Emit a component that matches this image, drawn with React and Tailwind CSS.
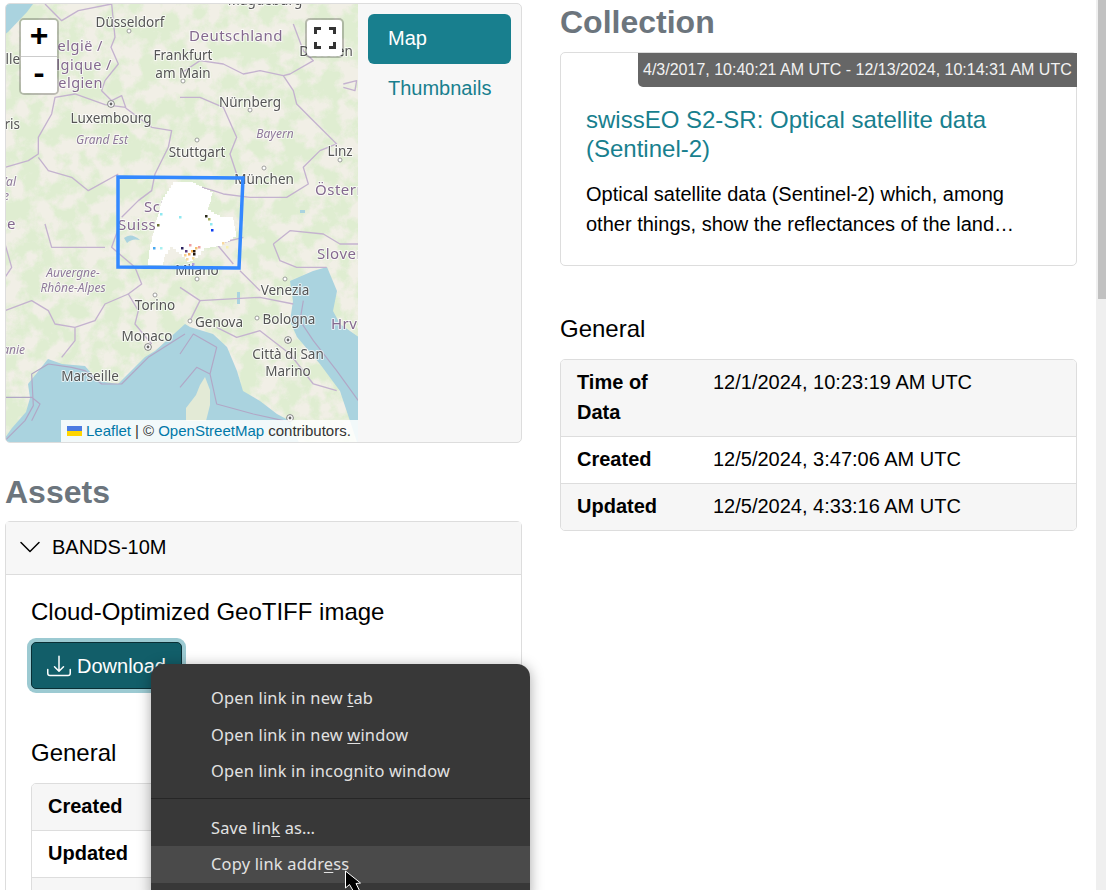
import { BsDownload, BsChevronDown } from "react-icons/bs";

const sans = "font-['Liberation_Sans',Arial,sans-serif]";

// map drawing, path coords are zoomed 3x from each map quadrant
const borders = [
  // north west
  [5, 4, "M320 0 L330 100 L318 130 L340 180 L300 230 L290 260 L320 290 L350 275 L362 310 L300 302 L210 270 L150 280 L140 330 L100 400 L100 450 L70 470 L0 490"],
  [5, 4, "M362 312 L440 370 L500 380 L490 430 L450 510 L440 560 L400 590 L350 640"],
  [5, 4, "M100 460 L130 500 L200 520 L250 560 L340 510 M120 0 L170 50 L220 20 L320 0"],
  // north east
  [180, 4, "M340 60 L370 140 L400 170 L330 210 L310 215 L340 260 L350 300 L400 350 L460 410 L470 420 L420 440 L370 490 L385 540 L320 580 L210 580 L130 570 L100 560 L30 540"],
  [180, 4, "M0 210 L60 170 L130 180 L190 210 L240 200 L310 215 M0 280 L60 280 L130 310 L170 400 L150 450 L170 510 M490 240 L530 230 L525 260 L490 250"],
  // south west
  [5, 224, "M345 0 L320 70 L390 130 L410 180 L370 210 L400 260 L390 300 L440 360 M0 60 L20 130 L0 160 M120 0 L140 70 L220 70 L300 70"],
  [5, 224, "M0 260 L80 230 L130 260 L150 300 L210 310 L210 350 L170 400 M210 310 L270 290 L300 240 L370 210"],
  // south east
  [180, 224, "M0 190 L60 230 L240 220 L340 240 M180 140 L240 200 M280 60 L330 20 L430 30 L480 60 L535 60 M280 60 L300 110 L350 130 L440 130"],
  [180, 224, "M60 230 L30 290 M110 310 L170 340 L240 320 L330 390 L400 480 L470 500 M160 120 L110 60 L190 40"],
];

const seaLines = [
  [5, 224, "M0 650 L60 590 L85 545 L80 450 L130 420 L200 430 L240 440 L290 480 L350 480 L430 400 L540 330 M0 520 L80 520 L105 540 L80 590"],
  [180, 224, "M0 390 L40 330 L110 370 L90 450 L110 540 L220 570 L310 590 M0 490 L50 430 L90 450 M370 230 L360 290 L400 350 L470 440 L535 530"],
];

const labels = [
  ["Magdeburg", 265, 5, "c"],
  ["Düsseldorf", 130, 27, "c"],
  ["Frankfurt", 183, 60, "c"],
  ["am Main", 183, 78, "c"],
  ["Nürnberg", 250, 107, "c"],
  ["Luxembourg", 111, 123, "c"],
  ["Stuttgart", 197, 157, "c"],
  ["Linz", 340, 156, "c"],
  ["München", 264, 184, "c"],
  ["Milano", 197, 275, "c"],
  ["Venezia", 285, 295, "c"],
  ["Torino", 155, 310, "c"],
  ["Genova", 219, 327, "c"],
  ["Bologna", 289, 324, "c"],
  ["Monaco", 147, 341, "c"],
  ["Città di San", 288, 359, "c"],
  ["Marino", 288, 376, "c"],
  ["Marseille", 90, 381, "c"],
  ["Paris", 20, 129, "e"],
  ["Lille", 20, 64, "e"],
  ["Dresden", 326, 56, "c"],
];

const countries = [
  ["Deutschland", 236, 41, "c", 15],
  ["België /", 103, 51, "e", 14.5],
  ["Belgique /", 112, 70, "e", 14.5],
  ["Belgien", 103, 88, "e", 14.5],
  ["Österreich", 315, 195, "s", 15],
  ["Schweiz", 144, 212, "s", 15],
  ["Suisse", 118, 230, "s", 15],
  ["Slovenija", 317, 259, "s", 15],
  ["Hrvatska", 331, 329, "s", 15],
  ["France", 16, 229, "e", 15],
];

const regions = [
  ["Grand Est", 102, 144, "c"],
  ["Bayern", 275, 138, "c"],
  ["Auvergne-", 73, 277, "c"],
  ["Rhône-Alpes", 73, 292, "c"],
  ["Centre-Val", 16, 186, "e"],
  ["de Loire", 9, 200, "e"],
  ["Occitanie", 25, 354, "e"],
];

const dots = [
  [129, 31], [183, 81], [250, 110], [197, 140], [264, 168], [340, 160],
  [197, 279], [285, 279], [155, 295], [190, 321], [257, 318],
];

const targets = [[111, 104], [288, 340], [148, 347], [290, 418]];

const specks = [
  [160, 213, "#8fe8f0"], [179, 216, "#8fe8f0"], [211, 229, "#0a3cf0"], [210, 223, "#8fe8f0"],
  [205, 215, "#2b2b1a"], [208, 218, "#a8b060"], [153, 247, "#4aa8f0"], [160, 247, "#a8f0f0"],
  [181, 247, "#2a2060"], [185, 250, "#5a3a80"], [191, 250, "#f4b050"], [195, 247, "#f4c070"],
  [193, 250, "#2b1a10"], [193, 253, "#20180c"], [188, 253, "#f0a860"], [184, 254, "#f6d090"],
  [186, 258, "#f6d8a0"], [192, 257, "#f8e0a0"], [192, 263, "#b0a0e0"], [222, 242, "#f8d8a0"],
  [226, 246, "#f8f0b0"], [157, 224, "#6a7030"], [189, 244, "#f0a0a0"], [198, 246, "#f0a0a0"],
];

const footprint = [
  [148, 265], [149, 250], [153, 233], [157, 217], [163, 197], [173, 182], [190, 182], [213, 193],
  [208, 210], [220, 217], [233, 217], [236, 237], [222, 246], [207, 248], [198, 258], [190, 262],
  [182, 254], [173, 247], [165, 257], [163, 265],
];

// raster edge of the overlay, walk the outline in small stairs
function stairs(points, step = 3) {
  let d = `M${points[0][0]} ${points[0][1]}`;
  points.forEach(([x, y], i) => {
    const [nx, ny] = points[(i + 1) % points.length];
    const n = Math.max(1, Math.round(Math.max(Math.abs(nx - x), Math.abs(ny - y)) / step));
    for (let k = 1; k <= n; k++) {
      const px = x + ((nx - x) * k) / n;
      const py = y + ((ny - y) * k) / n;
      d += ` H${Math.round(px)} V${Math.round(py)}`;
    }
  });
  return d + " Z";
}

function Lines({ items, color, width }) {
  return items.map(([x, y, d], i) => (
    <g key={i} transform={`translate(${x} ${y}) scale(0.3333)`}>
      <path d={d} fill="none" stroke={color} strokeWidth={width} strokeLinejoin="round" />
    </g>
  ));
}

function MapArt() {
  const anchor = { c: "middle", e: "end", s: "start" };
  return (
    <svg width="352" height="438" viewBox="6 4 352 438" className="block">
      <defs>
        <filter id="greens" x="0" y="0" width="100%" height="100%">
          <feTurbulence type="fractalNoise" baseFrequency="0.05" numOctaves="5" seed="7" />
          <feColorMatrix values="0 0 0 0 0.72  0 0 0 0 0.85  0 0 0 0 0.62  0 0 0 4.5 -1.7" />
        </filter>
        <filter id="soft">
          <feGaussianBlur stdDeviation="0.45" />
        </filter>
      </defs>

      <g filter="url(#soft)">
        <rect x="0" y="0" width="360" height="445" fill="#f1efe6" />
        <rect x="0" y="0" width="360" height="445" fill="#000" filter="url(#greens)" opacity="0.85" />
        {/* north sea */}
        <path d="M0 0 H36 L27 12 L8 32 L0 38 Z" fill="#aad3df" />
        {/* mediterranean */}
        <path
          d="M0 445 L12 428 L26 412 L30 398 L28 384 L48 359 L62 364 L85 366 L98 381 L118 384 L145 357 L155 351 L185 324 L190 327 L213 334 L227 347 L237 371 L243 391 L260 401 L277 414 L290 421 L300 445 Z"
          fill="#aad3df"
        />
        {/* adriatic */}
        <path
          d="M290 281 L313 271 L327 267 L337 291 L333 311 L340 324 L360 338 V445 H358 L340 391 L320 364 L297 337 L290 321 L293 301 Z"
          fill="#aad3df"
        />
        {/* corsica and lakes */}
        <path d="M205 377 L210 390 L210 405 L206 421 H186 L186 408 L196 395 L200 385 Z" fill="#e3ead6" />
        <path d="M124 238 Q131 232 140 240 Q132 238 127 243 Z" fill="#aad3df" />
        <path d="M237 292 h3 v12 h-3 Z M300 210 h5 v3 h-5 Z" fill="#aad3df" />
        <Lines items={seaLines} color="#b1a7c6" width="3.5" />
        <Lines items={borders} color="#c4b2cf" width="4" />

        {dots.map(([x, y], i) => (
          <circle key={i} cx={x} cy={y} r="2" fill="#fff" stroke="#8a8a8a" strokeWidth="0.8" />
        ))}
        {targets.map(([x, y], i) => (
          <g key={i}>
            <circle cx={x} cy={y} r="3.4" fill="#fff" stroke="#777" strokeWidth="0.9" />
            <circle cx={x} cy={y} r="1.4" fill="#666" />
          </g>
        ))}

        <g fontFamily="'Noto Sans',sans-serif" strokeLinejoin="round" style={{ paintOrder: "stroke" }}>
          {labels.map(([t, x, y, a]) => (
            <text key={t} x={x} y={y} textAnchor={anchor[a]} fontSize="13.5" fill="#555" stroke="#ffffff" strokeOpacity="0.7" strokeWidth="2">
              {t}
            </text>
          ))}
          {countries.map(([t, x, y, a, s]) => (
            <text key={t} x={x} y={y} textAnchor={anchor[a]} fontSize={s} letterSpacing="0.5" fill="#84698f" stroke="#ffffff" strokeOpacity="0.7" strokeWidth="2">
              {t}
            </text>
          ))}
          {regions.map(([t, x, y, a]) => (
            <text key={t} x={x} y={y} textAnchor={anchor[a]} fontSize="12" fontStyle="italic" fill="#8f7a9b" stroke="#ffffff" strokeOpacity="0.6" strokeWidth="2">
              {t}
            </text>
          ))}
        </g>

        {/* scene footprint */}
        <path d={stairs(footprint)} fill="#fff" />
        {specks.map(([x, y, c], i) => (
          <rect key={i} x={x} y={y} width="2.5" height="2.5" fill={c} />
        ))}
      </g>

      <path d="M118 177 L243 178 L239 268 L118 267 Z" fill="none" stroke="#3388ff" strokeWidth="3.5" />
    </svg>
  );
}

function MapControls() {
  return (
    <>
      <div className="absolute left-[13px] top-[14px] w-[40px] rounded-[5px] border-2 border-[rgba(0,0,0,0.22)] bg-clip-padding">
        <div className="h-[37px] rounded-t-[3px] bg-white border-b border-[#ccc] flex items-center justify-center text-[32px] font-bold leading-none text-black font-['Liberation_Mono',monospace]">
          +
        </div>
        <div className="h-[36px] rounded-b-[3px] bg-white flex items-center justify-center text-[30px] font-bold leading-none text-black font-['Liberation_Mono',monospace]">
          -
        </div>
      </div>
      <div className="absolute left-[299px] top-[14px] w-[39px] h-[40px] rounded-[5px] border-2 border-[rgba(0,0,0,0.22)] bg-white bg-clip-padding flex items-center justify-center">
        <svg width="22" height="22" viewBox="0 0 22 22" fill="none" stroke="#333" strokeWidth="3">
          <path d="M1.5 7V1.5H7M15 1.5H20.5V7M20.5 15V20.5H15M7 20.5H1.5V15" />
        </svg>
      </div>
      <div className="absolute right-0 bottom-0 h-[22px] w-[297px] bg-[rgba(255,255,255,0.85)] flex items-center pl-[6px] text-[15px] text-[#333] whitespace-nowrap">
        <svg width="15" height="10" viewBox="0 0 12 8" className="mr-[4px]">
          <rect width="12" height="4" fill="#4C7BE1" />
          <rect y="4" width="12" height="4" fill="#FFD500" />
        </svg>
        <span className="text-[#0078a8]">Leaflet</span>
        <span className="mx-[4px]">|</span>
        <span>©&nbsp;</span>
        <span className="text-[#0078a8]">OpenStreetMap</span>
        <span>&nbsp;contributors.</span>
      </div>
    </>
  );
}

function InfoTable({ rows, labelWidth }) {
  return (
    <div className="rounded-[5px] border border-[#ddd] overflow-hidden text-[20px] leading-[30px]">
      {rows.map((r, i) => (
        <div
          key={i}
          className={`flex min-h-[46px] ${i > 0 ? "border-t border-[#ddd]" : ""} ${i % 2 === 0 ? "bg-[#f6f6f6]" : "bg-white"}`}
        >
          <div className={`${labelWidth} shrink-0 pl-[16px] pr-[32px] pt-[7px] pb-[9px] font-bold`}>{r[0]}</div>
          <div className="pt-[7px] pb-[9px]">{r[1]}</div>
        </div>
      ))}
    </div>
  );
}

function MenuItem({ children, active }) {
  return (
    <div className={`pl-[60px] flex items-center ${active ? "h-[37px] bg-[#4a4a4a]" : "h-[36.5px]"}`}>{children}</div>
  );
}

function ContextMenu() {
  return (
    <div className="absolute left-[151px] top-[664px] w-[379px] h-[240px] rounded-t-[13px] rounded-b-[13px] bg-[#383838] text-[#e2e2e2] text-[16.4px] tracking-[0.2px] font-['Noto_Sans',sans-serif] shadow-[0_2px_14px_rgba(0,0,0,0.35)] pt-[16px] leading-none whitespace-nowrap">
      <MenuItem>
        <span>Open link in new <u className="underline-offset-2">t</u>ab</span>
      </MenuItem>
      <MenuItem>
        <span>Open link in new <u className="underline-offset-2">w</u>indow</span>
      </MenuItem>
      <MenuItem>
        <span>Open link in inco<u className="underline-offset-2">g</u>nito window</span>
      </MenuItem>
      <div className="mt-[8px] mb-[11px] border-t border-[#262626]" />
      <MenuItem>
        <span>Save lin<u className="underline-offset-2">k</u> as…</span>
      </MenuItem>
      <MenuItem active>
        <span>Copy link addr<u className="underline-offset-2">e</u>ss</span>
      </MenuItem>
    </div>
  );
}

export default function App() {
  return (
    <div className={`relative h-[890px] w-[1106px] overflow-hidden bg-white text-black flex ${sans}`}>
      <main className="w-[1096px] flex pl-[5px] gap-[38px] pt-[3px]">
        {/* LEFT */}
        <div className="w-[517px]">
          <div className="h-[440px] rounded-[5px] border border-[#ddd] bg-[#f7f7f7] overflow-hidden flex">
            <div className="relative w-[352px] h-[438px] shrink-0">
              <MapArt />
              <MapControls />
            </div>
            <div className="ml-[10px] w-[143px] pt-[10px] text-[20px] leading-[30px]">
              <div className="h-[50px] rounded-[6px] bg-[#187f8e] text-white px-[20px] py-[9px]">Map</div>
              <div className="h-[50px] text-[#187f8e] px-[20px] py-[9px]">Thumbnails</div>
            </div>
          </div>

          <h2 className="mt-[30px] mb-[10px] text-[32px] leading-[38px] font-bold text-[#6c757d]">Assets</h2>

          <div className="rounded-t-[5px] border border-[#ddd]">
            <div className="h-[53px] bg-[#f7f7f7] border-b border-[#ddd] flex items-center pl-[12px] pb-[2px] text-[20px]">
              <BsChevronDown size={24} className="mr-[10px]" />
              BANDS-10M
            </div>
            <div className="px-[25px] pt-[22px]">
              <div className="text-[24px] leading-[29px]">Cloud-Optimized GeoTIFF image</div>
              <div className="mt-[16px] w-[151px] h-[47px] rounded-[5px] border border-[#0a2f35] bg-[#125e69] ring-4 ring-[#9ccad2] text-white flex items-center pl-[15px] text-[20px] whitespace-nowrap">
                <BsDownload size={24} className="mr-[6px]" />
                Download
              </div>
              <div className="mt-[49px] mb-[16px] text-[24px] leading-[29px]">General</div>
              <InfoTable labelWidth="w-[136px]" rows={[["Created", ""], ["Updated", ""], ["", ""]]} />
            </div>
          </div>
        </div>

        {/* RIGHT */}
        <div className="w-[517px]">
          <h2 className="text-[32px] leading-[38px] font-bold text-[#6c757d] mb-[11px]">Collection</h2>
          <div className="relative rounded-[5px] border border-[#ddd] px-[25px] pt-[52px] pb-[26px]">
            <div className="absolute right-[-1px] top-0 h-[34px] w-[439px] rounded-bl-[5px] bg-[#666] text-[#f2f2f2] text-[16px] flex items-center pl-[5px] whitespace-nowrap">
              4/3/2017, 10:40:21 AM UTC - 12/13/2024, 10:14:31 AM UTC
            </div>
            <div className="text-[24px] leading-[29px] text-[#187f8e]">swissEO S2-SR: Optical satellite data (Sentinel-2)</div>
            <p className="mt-[16px] text-[20px] leading-[30px]">
              Optical satellite data (Sentinel-2) which, among other things, show the reflectances of the land…
            </p>
          </div>
          <div className="mt-[48px] mb-[16px] text-[24px] leading-[29px]">General</div>
          <InfoTable
            labelWidth="w-[152px]"
            rows={[
              ["Time of Data", "12/1/2024, 10:23:19 AM UTC"],
              ["Created", "12/5/2024, 3:47:06 AM UTC"],
              ["Updated", "12/5/2024, 4:33:16 AM UTC"],
            ]}
          />
        </div>
      </main>

      {/* scrollbar */}
      <div className="w-[10px] h-full bg-[#efefef] pl-[2px]">
        <div className="h-[299px] bg-[#c1c1c1]" />
      </div>

      <ContextMenu />

      {/* mouse pointer */}
      <svg width="18" height="22" viewBox="0 0 18 22" className="absolute left-[344px] top-[870px]">
        <path d="M1.5 1 V18 L5.5 14.5 L9 20.5 L15.5 20.5 L12 13.5 L16.5 13 Z" fill="#000" stroke="#fff" strokeWidth="1" strokeLinejoin="round" />
      </svg>
    </div>
  );
}
